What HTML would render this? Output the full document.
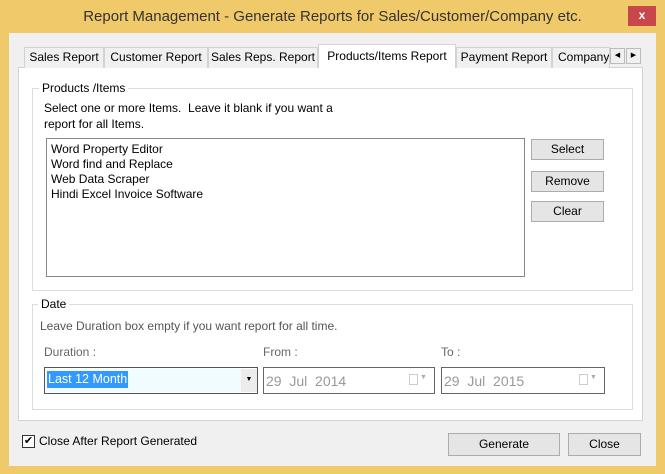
<!DOCTYPE html><html><head><style>
*{margin:0;padding:0;box-sizing:border-box}
body{width:665px;height:474px;background:#f0c96a;font-family:"Liberation Sans",sans-serif;font-size:12px;color:#000;position:relative;overflow:hidden}
.a{position:absolute}
.tab{position:absolute;top:47px;height:21px;border:1px solid #d2d2d2;border-bottom:none;background:#f0f0f0;font-size:12px;line-height:19px;text-align:center;white-space:nowrap;overflow:hidden}
.btn{position:absolute;background:#e5e5e5;border:1px solid #acacac;text-align:center;font-size:12px}
.grp{position:absolute;border:1px solid #dcdcdc}
.lg{position:absolute;background:#fff;padding:0 3px;top:-8px;left:6px}
.box{position:absolute;background:#fff;border:1px solid #7a7a7a}
</style></head><body>
<div class="a" style="left:0;top:8px;width:665px;text-align:center;font-size:15px;color:#333;">Report Management - Generate Reports for Sales/Customer/Company etc.</div>
<div class="a" style="left:628px;top:6px;width:28px;height:20px;background:#c7474b;color:#fff;text-align:center;font-size:12px;line-height:19px;font-weight:bold">x</div>
<div class="a" style="left:9px;top:33px;width:647px;height:433px;background:#f0f0f0"></div>
<div class="a" style="left:18px;top:67px;width:625px;height:354px;background:#fff;border:1px solid #d2d2d2"></div>
<div class="tab" style="left:24px;width:80px">Sales Report</div>
<div class="tab" style="left:104px;width:104px">Customer Report</div>
<div class="tab" style="left:208px;width:110px">Sales Reps. Report</div>
<div class="tab" style="left:318px;top:44px;height:24px;width:138px;background:#fff;line-height:22px;z-index:2">Products/Items Report</div>
<div class="tab" style="left:456px;width:96px">Payment Report</div>
<div class="tab" style="left:552px;width:58px;text-align:left;padding-left:5px">Company</div>
<div class="a" style="left:610px;top:48px;width:15px;height:16px;border:1px solid #bbb;background:#f0f0f0;font-size:7px;text-align:center;line-height:14px">◀</div>
<div class="a" style="left:626px;top:48px;width:15px;height:16px;border:1px solid #bbb;background:#f0f0f0;font-size:7px;text-align:center;line-height:14px">▶</div>
<div class="grp" style="left:32px;top:88px;width:601px;height:203px"><span class="lg">Products /Items</span></div>
<div class="a" style="left:44px;top:100px;line-height:16px">Select one or more Items.&nbsp; Leave it blank if you want a<br>report for all Items.</div>
<div class="box" style="left:46px;top:138px;width:479px;height:139px;border-color:#828790;padding:3px 0 0 4px;line-height:15px">Word Property Editor<br>Word find and Replace<br>Web Data Scraper<br>Hindi Excel Invoice Software</div>
<div class="btn" style="left:531px;top:139px;width:73px;height:21px;line-height:19px">Select</div>
<div class="btn" style="left:531px;top:171px;width:73px;height:21px;line-height:19px">Remove</div>
<div class="btn" style="left:531px;top:201px;width:73px;height:21px;line-height:19px">Clear</div>
<div class="grp" style="left:32px;top:304px;width:601px;height:106px"><span class="lg" style="left:5px">Date</span></div>
<div class="a" style="left:40px;top:319px;color:#555">Leave Duration box empty if you want report for all time.</div>
<div class="a" style="left:44px;top:345px;color:#666">Duration :</div>
<div class="a" style="left:263px;top:345px;color:#666">From :</div>
<div class="a" style="left:441px;top:345px;color:#666">To :</div>
<div class="box" style="left:44px;top:367px;width:214px;height:27px;border-color:#555"></div>
<div class="a" style="left:46px;top:369px;width:195px;height:23px;background:#f0fcff"></div>
<div class="a" style="left:47px;top:371px;background:#3399ff;color:#fff;padding:0 1px;line-height:17px;font-size:12.5px">Last 12 Month</div>
<div class="a" style="left:241px;top:369px;width:16px;height:23px;background:#ececec;font-size:7px;text-align:center;line-height:22px">▼</div>
<div class="box" style="left:263px;top:367px;width:172px;height:27px;border-color:#666;color:#999;font-size:14px;padding:5px 0 0 2px">29&nbsp; Jul&nbsp; 2014<span style="position:absolute;left:145px;top:6px;width:9px;height:11px;border:1px solid #ccc"></span><span style="position:absolute;left:156px;top:6px;font-size:7px;color:#aaa">▼</span></div>
<div class="box" style="left:441px;top:367px;width:164px;height:27px;border-color:#666;color:#999;font-size:14px;padding:5px 0 0 2px">29&nbsp; Jul&nbsp; 2015<span style="position:absolute;left:137px;top:6px;width:9px;height:11px;border:1px solid #ccc"></span><span style="position:absolute;left:148px;top:6px;font-size:7px;color:#aaa">▼</span></div>
<div class="a" style="left:22px;top:435px;width:13px;height:13px;border:1px solid #333;background:#fff;font-size:11px;line-height:11px;text-align:center">✔</div>
<div class="a" style="left:39px;top:434px">Close After Report Generated</div>
<div class="btn" style="left:448px;top:433px;width:112px;height:23px;line-height:21px">Generate</div>
<div class="btn" style="left:568px;top:433px;width:73px;height:23px;line-height:21px">Close</div>
</body></html>
